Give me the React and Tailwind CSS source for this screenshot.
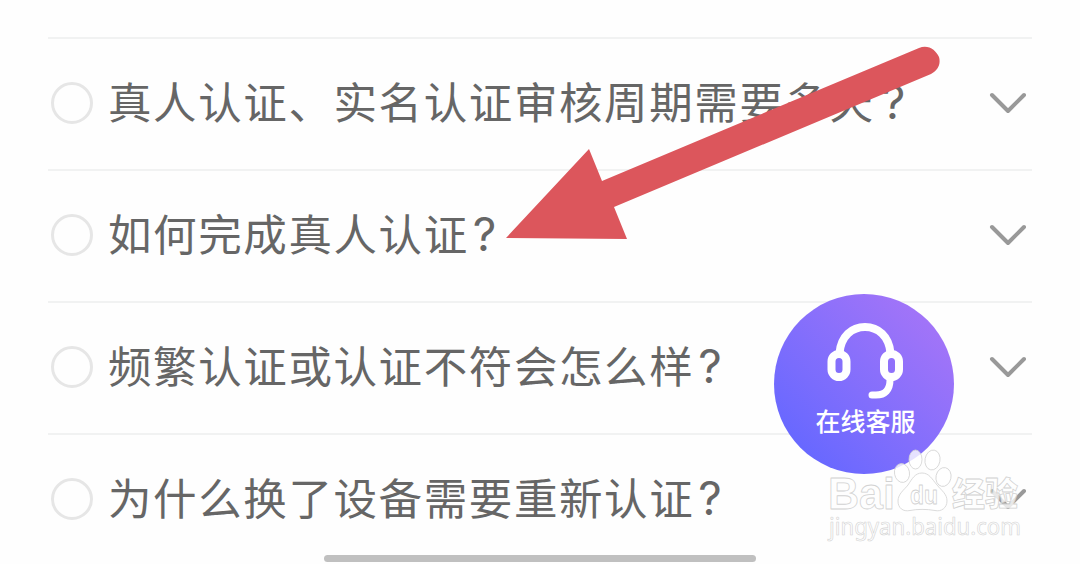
import React from 'react';

const questions = [
  { text: '真人认证、实名认证审核周期需要多天', markClass: 'pl-[7px]' },
  { text: '如何完成真人认证', markClass: 'pl-1' },
  { text: '频繁认证或认证不符会怎么样', markClass: 'pl-1' },
  { text: '为什么换了设备需要重新认证', markClass: 'pl-1' },
];

const QuestionRow = ({ text, markClass }) => (
  <li className="flex h-[132px] items-center border-t-2 border-[#f1f2f2] pr-[5px] pb-0.5 pl-[3px]">
    <span className="size-[42px] shrink-0 rounded-full border-[3px] border-[#e6e6e6]" />
    <p className="flex flex-1 items-baseline pb-[3px] pl-[15px] text-[43.5px] leading-none tracking-[1.6px] whitespace-nowrap text-[#666666]">
      <span>{text}</span>
      <span className={`font-['Inter'] text-[46px] leading-none ${markClass}`}>?</span>
    </p>
    <svg className="h-[22px] w-[38px] shrink-0" viewBox="0 0 38 22" fill="none" stroke="#999999" strokeWidth="4" strokeLinecap="round" strokeLinejoin="round">
      <path d="M3 3L19 19L35 3" />
    </svg>
  </li>
);

const ServiceButton = () => (
  <button className="absolute top-[294px] left-[774px] flex size-[180px] flex-col items-center rounded-full bg-linear-to-tr from-[#6868ff] from-15% to-[#a174f8] to-85% pt-[27px]">
    <svg className="size-20" viewBox="0 0 80 80" fill="none" stroke="white" strokeWidth="8" strokeLinecap="round">
      <path d="M15.500 32C17 15 28 6 41 6C54 6 65 15 66.500 32" />
      <rect x="7.500" y="33" width="15" height="23" rx="7.500" />
      <rect x="60" y="33" width="15" height="23" rx="7.500" />
      <path d="M66 56V59C66 69 61 74 52 74H48" strokeWidth="7" />
    </svg>
    <span className="pt-[7px] pl-[3px] text-[25px] leading-none font-medium text-white">在线客服</span>
  </button>
);

const Watermark = () => (
  <svg className="absolute top-[444px] left-[820px] h-[104px] w-[220px]" viewBox="0 0 220 104" fill="white" fillOpacity="0.8" stroke="#d2d2d2" strokeWidth="0.8" strokeLinejoin="round">
    <text x="8" y="65" fontSize="45" fontWeight="700" textLength="67" lengthAdjust="spacingAndGlyphs" fontFamily="Liberation Sans">Bai</text>
    <ellipse cx="82" cy="29" rx="7.500" ry="9.500" transform="rotate(-10 82 29)" />
    <ellipse cx="95.500" cy="15.500" rx="6.500" ry="9.500" />
    <ellipse cx="112.500" cy="16" rx="7.500" ry="10" transform="rotate(10 112.500 16)" />
    <ellipse cx="123.500" cy="33" rx="7.500" ry="9.500" transform="rotate(12 123.500 33)" />
    <path d="M102 29C109 29 112 35 117 41C122 47 127 50 127 57C127 64 121 68 115 66.500C107 65 97 65 90 66.500C83 68 78 64 78 57C78 50 84 46 88 41C92 35 95 29 102 29Z" />
    <text x="90" y="60" fontSize="26" fontWeight="700" textLength="28" lengthAdjust="spacingAndGlyphs" fontFamily="Liberation Sans">du</text>
    <text x="132" y="62" fontSize="33" fontWeight="900" textLength="66" fontFamily="Noto Sans CJK SC">经验</text>
    <text x="9" y="91" fontSize="23" textLength="192" lengthAdjust="spacingAndGlyphs" fontFamily="Noto Sans" strokeWidth="0.6">jingyan.baidu.com</text>
  </svg>
);

const App = () => (
  <main className="relative flex h-[564px] w-[1080px] flex-col overflow-hidden bg-[#fefefe] font-['Noto_Sans_CJK_SC',sans-serif]">
    <ul className="h-[555px] shrink-0 overflow-hidden px-12 pt-[37px]">
      {questions.map((question) => (
        <QuestionRow key={question.text} {...question} />
      ))}
    </ul>
    <div className="h-[7px] w-[432px] shrink-0 self-center rounded-full bg-[#c0c0c0]" />

    {/* Pointer to the real-person verification question */}
    <svg className="absolute top-[40px] left-[500px] h-[210px] w-[450px]" viewBox="500 40 450 210" fill="#dc565c">
      <path d="M506 238L589 149L602 181L919 48C928 44 936 50 939 57C941 64 938 70 931 74L614 207L627 239Z" />
    </svg>

    <ServiceButton />
    <Watermark />
  </main>
);

export default App;
